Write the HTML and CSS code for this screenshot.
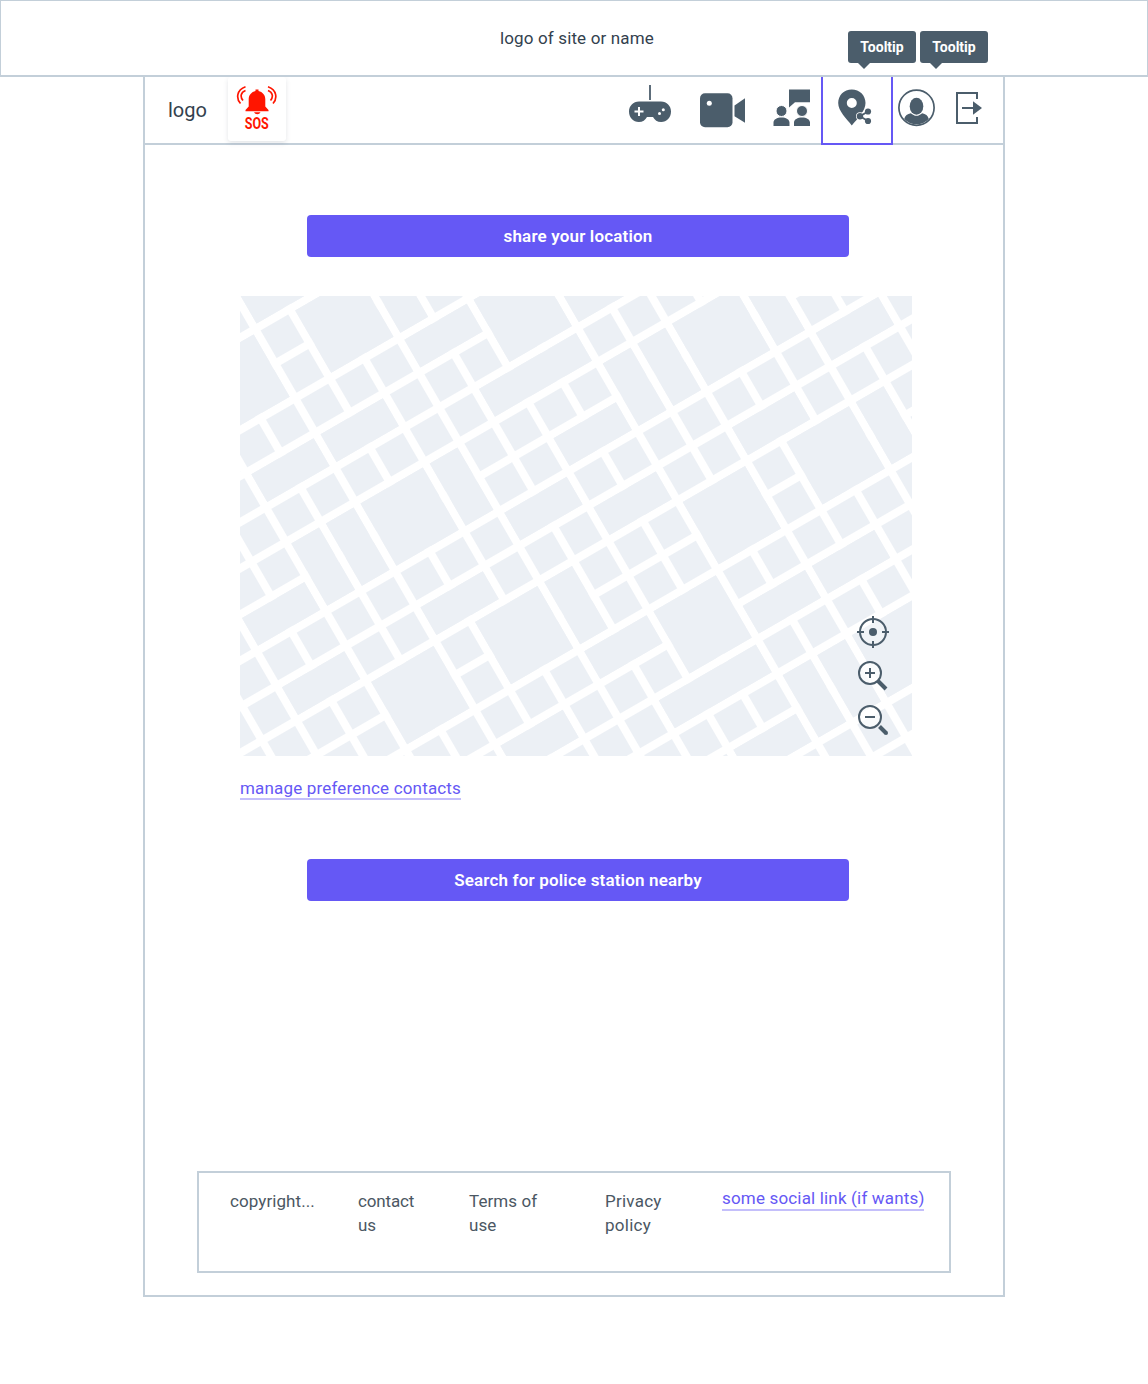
FILE: index.html
```
<!DOCTYPE html>
<html lang="en">
<head>
<meta charset="utf-8">
<title>Share location</title>
<link rel="stylesheet" href="styles.css">
</head>
<body>
<header class="site-header">
  <span class="site-name">logo of site or name</span>
  <div class="tooltip tooltip-share">Tooltip</div>
  <div class="tooltip tooltip-profile">Tooltip</div>
</header>
<main class="frame">
  <nav class="nav">
    <span class="brand">logo</span>
    <a class="sos">
      <svg width="58" height="64" viewBox="0 0 58 64">
        <path fill="#ff1500" d="M27.500 14v-1.500h3V14c4 .8 6.800 4.200 6.800 8.200v7.300l3.200 3.500v1.300h-23V33l3.200-3.500v-7.300c0-4 2.800-7.400 6.800-8.200zM26 35.300h6.500c-.6 1.300-1.800 2-3.200 2s-2.700-.7-3.300-2z"/>
        <g fill="none" stroke="#ff1500" stroke-width="1.700"><path d="M17.500 9.700c-9 3-9.500 12-5 16.800M17.500 13.500c-5 2-5.500 6.500-2.500 10M40 9.700c9 3 9.500 12 5 16.800M40 13.500c5 2 5.500 6.500 2.500 10"/></g>
        <text class="sos-text" x="16.700" y="52" textLength="24" lengthAdjust="spacingAndGlyphs">SOS</text>
      </svg>
    </a>
    <a class="nav-item game">
      <svg width="44" height="42" viewBox="0 0 44 42">
        <path fill="none" stroke="#4b5d6b" stroke-width="1.800" d="M22 0v15"/>
        <path fill="#4b5d6b" d="M11 16.500h22c5.800 0 10 4.500 10 10 0 6-4.300 10.500-9.800 10.500-4 0-6.500-2-8.200-5h-6c-1.700 3-4.200 5-8.200 5C5.300 37 1 32.500 1 26.500c0-5.500 4.200-10 10-10z"/>
        <path stroke="#fff" stroke-width="2" d="M11 22v9M6.500 26.500h9"/>
        <circle cx="31.500" cy="28.500" r="1.500" fill="#fff"/><circle cx="35.300" cy="24.800" r="1.500" fill="#fff"/>
      </svg>
    </a>
    <a class="nav-item video">
      <svg width="46" height="35" viewBox="0 0 46 35">
        <rect width="32.500" height="34" y=".3" rx="5" fill="#4b5d6b"/>
        <path fill="#4b5d6b" d="M34.500 12.500 45 5.200v24.500l-10.500-6.500z"/>
        <circle cx="9.300" cy="10.200" r="2.500" fill="#fff"/>
      </svg>
    </a>
    <a class="nav-item group">
      <svg width="38" height="38" viewBox="0 0 38 38">
        <g fill="#4b5d6b"><path d="M16 .5h21v12.700H22L16 18.500z"/>
        <path d="M.5 37v-3.500c0-3 3.500-5 8-5s8 2 8 5V37zM21 37v-3.500c0-3 3.500-5 8-5s8 2 8 5V37z"/></g>
        <circle cx="8.500" cy="22" r="5.500" fill="#4b5d6b" stroke="#fff"/><circle cx="29" cy="22" r="5.500" fill="#4b5d6b" stroke="#fff"/>
      </svg>
    </a>
    <a class="nav-item share active">
      <svg width="34" height="38" viewBox="0 0 34 38">
        <path fill="#4b5d6b" fill-rule="evenodd" d="M13.800.5C21.500.5 27.500 6.300 27.500 14c0 8-8 15.500-13.700 22.500C8.500 29.500.2 22 .2 14 .2 6.300 6 .5 13.800.5zm0 8.500a5 5 0 1 0 0 10 5 5 0 0 0 0-10z"/>
        <g stroke="#fff" stroke-width="4" fill="#fff"><path fill="none" d="M30 22.500 22 27l8 5"/><circle cx="30" cy="22.500" r="2"/><circle cx="22" cy="27.200" r="2"/><circle cx="30" cy="32" r="2"/></g>
        <path fill="none" stroke="#4b5d6b" stroke-width="1.900" d="M30 22.500 22 27.200l8 4.800"/>
        <g fill="#4b5d6b"><circle cx="30" cy="22.500" r="3.100"/><circle cx="22" cy="27.200" r="3.200"/><circle cx="30" cy="32" r="3.100"/></g>
      </svg>
    </a>
    <a class="nav-item profile">
      <svg width="38" height="38" viewBox="0 0 38 38">
        <circle cx="18.500" cy="18.700" r="17.600" fill="#fff" stroke="#4b5d6b" stroke-width="1.700"/>
        <path fill="#4b5d6b" d="M12.800 24.200c2 1.500 3.500 2.600 5.700 2.600s3.700-1.100 5.700-2.600c3.300.6 5.800 2.300 6.600 5.800a17 17 0 0 1-24.600 0c.8-3.500 3.300-5.200 6.600-5.800z"/>
        <ellipse cx="18.500" cy="17.300" rx="6.800" ry="8.500" fill="#4b5d6b"/>
      </svg>
    </a>
    <a class="nav-item exit">
      <svg width="29" height="34" viewBox="0 0 29 34">
        <path fill="none" stroke="#4b5d6b" stroke-width="2" d="M22 8V2H2v30h20v-6M7 17h12"/>
        <path fill="#4b5d6b" d="M18 10.300 27 17l-9 6.700z"/>
      </svg>
    </a>
  </nav>

  <button class="button">share your location</button>

  <div class="map">
    <svg class="map-tiles" width="672" height="460" viewBox="240 296 672 460">
      <defs>
        <pattern id="plots" width="40" height="40" patternUnits="userSpaceOnUse">
          <rect width="40" height="40" fill="#fff"/>
          <rect x="4" y="4" width="32" height="32" fill="#ecf0f5"/>
        </pattern>
      </defs>
      <g id="grid" transform="translate(295.100 398.200) rotate(-30) scale(.9992)">
        <rect x="-400" y="-400" width="1200" height="1200" fill="url(#plots)"/>
      </g>
    </svg>
    <div class="map-tools">
      <svg width="32" height="32" viewBox="0 0 32 32">
        <circle cx="16" cy="16" r="13" fill="#fff" fill-opacity=".25" stroke="#4b5d6b" stroke-width="2"/>
        <circle cx="16" cy="16" r="4" fill="#4b5d6b"/>
        <path stroke="#4b5d6b" stroke-width="2" d="M16 0v7M16 25v7M0 16h7M25 16h7"/>
      </svg>
      <svg width="32" height="32" viewBox="0 0 32 32">
        <circle cx="13" cy="13" r="11" fill="#fff" fill-opacity=".7" stroke="#4b5d6b" stroke-width="2"/>
        <path stroke="#4b5d6b" stroke-width="2" d="M13 8v10M8 13h10"/>
        <path stroke="#4b5d6b" stroke-width="4" d="m20.500 20.500 8.500 8.500"/>
      </svg>
      <svg width="32" height="32" viewBox="0 0 32 32">
        <circle cx="13" cy="13" r="11" fill="#fff" fill-opacity=".7" stroke="#4b5d6b" stroke-width="2"/>
        <path stroke="#4b5d6b" stroke-width="2" d="M8 13h10"/>
        <path stroke="#4b5d6b" stroke-width="4" d="m22.500 22.500 6.500 6.500"/><circle cx="29" cy="29" r="2" fill="#4b5d6b"/>
      </svg>
    </div>
  </div>

  <a class="link contacts">manage preference contacts</a>
  <button class="button police">Search for police station nearby</button>

  <footer class="footer">
    <span class="foot copy">copyright...</span>
    <span class="foot contact">contact<br>us</span>
    <span class="foot terms">Terms of<br>use</span>
    <span class="foot privacy">Privacy<br>policy</span>
    <a class="link social">some social link (if wants)</a>
  </footer>
</main>
<script src="map.js"></script>
</body>
</html>
```

FILE: styles.css
```
* { box-sizing: border-box; }
body { margin: 0; min-height: 1384px; background: #fff; font-family: Roboto, "Liberation Sans", sans-serif; font-size: 17px; color: #33414e; }
svg { display: block; }
.site-header { position: relative; height: 77px; border: 1px solid #c3cfd9; border-bottom-width: 2px; background: #fff; padding: 25px 0 0 499px; line-height: 24px; }
.site-name { letter-spacing: .14px; }
.tooltip { position: absolute; top: 30px; width: 68px; height: 32px; border-radius: 3px; background: #4b5d6b; color: #fff; font-size: 14px; font-weight: 700; line-height: 32px; text-align: center; }
.tooltip::after { content: ""; position: absolute; left: 10px; top: 32px; border: 6px solid transparent; border-top-color: #4b5d6b; border-bottom: 0; }
.tooltip-share { left: 847px; }
.tooltip-profile { left: 919px; }
.frame { width: 862px; height: 1220px; margin: 0 143px; border: 2px solid #c3cfd9; border-top: 0; display: flex; flex-direction: column; align-items: flex-start; }
.nav { display: flex; align-items: flex-start; width: 858px; height: 68px; border-bottom: 2px solid #c3cfd9; }
.brand { width: 60px; margin-left: 23px; padding-top: 19px; font-size: 20px; line-height: 28px; }
.sos { width: 58px; height: 64px; border-radius: 3px; background: #fff; box-shadow: 0 2px 5px rgba(60, 70, 90, .14); }
.sos-text { font: 700 16.500px Roboto, sans-serif; fill: #ff1500; }
.game { margin: 8px 0 0 342px; }
.video { margin: 16px 0 0 28px; }
.group { margin: 12px 0 0 27px; }
.share { width: 72px; height: 68px; margin-left: 10px; padding: 12px 0 0 15px; border: 2px solid #6558f5; border-top: 0; }
.profile { margin: 12px 0 0 5px; }
.exit { margin: 14px 0 0 19px; }
.button { width: 542px; height: 42px; margin: 70px 0 0 162px; padding: 0; border: 0; border-radius: 4px; background: #6558f5; color: #fff; font: 600 17px/42px Roboto, "Liberation Sans", sans-serif; letter-spacing: .17px; }
.map { position: relative; width: 672px; height: 460px; margin: 39px 0 0 95px; overflow: hidden; }
.map-tools { position: absolute; left: 617px; top: 320px; display: grid; gap: 12px; }
.link { color: #6558f5; line-height: 22px; border-bottom: 2px solid #c4bffb; white-space: nowrap; letter-spacing: .17px; }
.contacts { height: 23px; margin: 21px 0 0 95px; width: 221px; }
.police { margin-top: 59px; }
.footer { display: flex; width: 754px; height: 102px; margin: 270px 0 0 52px; padding: 16px 0 0 31px; border: 2px solid #c3cfd9; line-height: 24px; color: #4b5763; }
.foot { white-space: nowrap; letter-spacing: .08px; }
.copy { width: 128px; }
.contact { width: 111px; letter-spacing: -.15px; }
.terms { width: 136px; }
.privacy { width: 117px; letter-spacing: .25px; }
.social { width: 202px; height: 22px; line-height: 19px; }
```

FILE: map.js
```
// City blocks that span several plots: [column, row, columns, rows]
const blocks = [
  [0,-3,2,1],[1,-2,2,2],[-2,-2,2,2],[3,-2,1,2],[3,0,2,1],[0,1,2,1],[-2,1,2,1],[5,0,2,2],
  [4,2,3,1],[7,1,2,1],[9,3,2,2],[7,3,1,2],[8,3,1,2],[0,3,2,2],[2,3,1,2],[5,4,2,1],
  [-2,3,1,2],[-1,3,1,2],[-4,4,2,1],[3,5,2,1],[12,5,2,1],[11,3,1,2],[9,6,2,1],[5,6,2,1],
  [0,6,2,1],[-4,6,2,1],[-2,7,2,2],[1,7,2,2],[3,7,1,2],[7,7,2,2],[10,7,2,2],[12,7,1,2],
  [5,9,2,2],[7,10,2,1],[9,10,2,1],[3,9,2,1],[0,10,2,1],[4,11,3,1],[9,12,2,2],[8,12,1,2],
  [7,12,1,2],[5,13,2,1]
];
const grid = document.getElementById("grid");
for (const [col, row, cols, rows] of blocks) {
  const r = document.createElementNS("http://www.w3.org/2000/svg", "rect");
  r.setAttribute("x", col * 40 + 4);
  r.setAttribute("y", row * 40 + 4);
  r.setAttribute("width", cols * 40 - 8);
  r.setAttribute("height", rows * 40 - 8);
  r.setAttribute("fill", "#ecf0f5");
  grid.appendChild(r);
}
```
